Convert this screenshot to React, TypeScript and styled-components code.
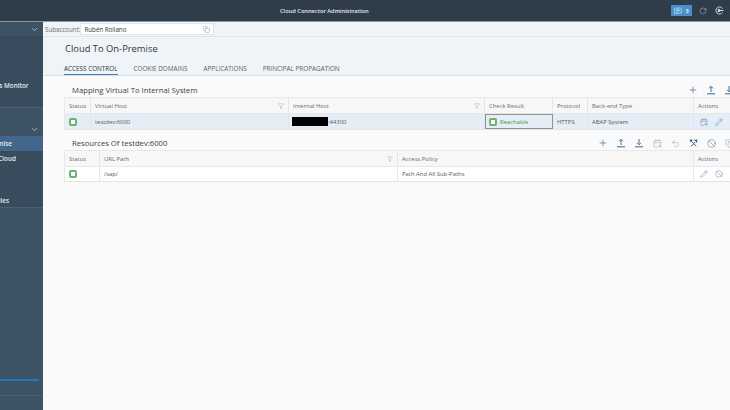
import styled, { createGlobalStyle } from "styled-components";
import {
  Ban,
  CalendarSearch,
  ChevronDown,
  Copy,
  Funnel,
  MessageSquareText,
  Pencil,
  Plus,
  RotateCw,
  Undo2,
} from "lucide-react";

const GlobalStyle = createGlobalStyle`
  html, body {
    margin: 0;
    height: 100%;
    overflow: hidden;
    font-family: "Open Sans", "Liberation Sans", sans-serif;
    background: #fafafa;
  }
  #root {
    height: 100%;
  }
`;

const Page = styled.div`
  display: flex;
  flex-direction: column;
  width: 730px;
  height: 410px;
  overflow: hidden;
`;

const TopBar = styled.header`
  display: flex;
  align-items: center;
  flex: 0 0 22px;
  box-sizing: border-box;
  padding-left: 280px;
  padding-right: 6px;
  background: #2f3d4b;
  border-bottom: 1px solid #8d99a4;
  color: #e3e8ec;
  font-size: 5.7px;
  font-weight: 600;
`;

const TopActions = styled.div`
  display: flex;
  align-items: center;
  gap: 8px;
  margin-left: auto;
  color: #d5dce2;
`;

const NoticeBadge = styled.div`
  display: flex;
  align-items: center;
  justify-content: center;
  gap: 3px;
  width: 21px;
  height: 11px;
  margin-right: -1px;
  background: #4a8fc9;
  color: #fff;
  font-size: 6px;
`;

const Body = styled.div`
  display: flex;
  flex: 1;
  min-height: 0;
`;

const Sidebar = styled.aside`
  flex: 0 0 43px;
  overflow: hidden;
  background: #3e5265;
`;

const SideInner = styled.nav`
  display: flex;
  flex-direction: column;
  width: 103px;
  height: 100%;
  margin-left: -60px;
  color: #e6ebef;
  font-size: 6.3px;
  font-weight: 600;
`;

const SideHead = styled.div`
  display: flex;
  align-items: center;
  justify-content: space-between;
  height: 14px;
  padding: 0 4px 0 8px;
  color: #c9d3db;
`;

const SideItem = styled.div<{ $active?: boolean; $indent?: number }>`
  display: flex;
  align-items: center;
  height: ${(p) => (p.$active ? 15 : 14)}px;
  padding-left: ${(p) => p.$indent ?? 8}px;
  white-space: nowrap;
  background: ${(p) => (p.$active ? "#41688c" : "transparent")};
`;

const SideGroup = styled.div<{ $pad?: number }>`
  display: flex;
  flex-direction: column;
  padding-bottom: ${(p) => p.$pad ?? 0}px;
  background: #394c5e;
  border-bottom: 1px solid #4d6072;
`;

const SideSpacer = styled.div`
  height: 14px;
`;

const SideFoot = styled.div`
  margin-top: auto;
`;

const SideLine = styled.div`
  height: 2px;
  margin-right: 4px;
  margin-bottom: 14px;
  background: #1f7bb3;
`;

const SideBottom = styled(SideItem)`
  height: 14px;
  border-top: 1px solid #4d6072;
`;

const Main = styled.main`
  display: flex;
  flex-direction: column;
  flex: 1;
  min-width: 0;
  background: #fafafa;
`;

const SubBar = styled.div`
  display: flex;
  align-items: center;
  height: 14px;
  padding-left: 2px;
  background: #eff4f9;
  border-bottom: 1px solid #dfe6ec;
  color: #6a6d70;
  font-size: 6.2px;
`;

const SubInput = styled.div`
  display: flex;
  align-items: center;
  justify-content: space-between;
  box-sizing: border-box;
  width: 134px;
  height: 12px;
  padding: 0 3px;
  background: #fff;
  border: 1px solid #e3e7ea;
  color: #33363a;
  svg {
    color: #5b87ad;
  }
`;

const PageHead = styled.div`
  display: flex;
  flex-direction: column;
  height: 39px;
  padding-left: 21px;
  box-sizing: border-box;
  background: #eff4f9;
  border-bottom: 1px solid #d7e2ee;
`;

const PageTitle = styled.h1`
  margin: 4px 0 0 1px;
  color: #32363a;
  font-size: 9.4px;
  font-weight: 400;
  line-height: 16px;
`;

const Tabs = styled.div`
  display: flex;
  gap: 16px;
  margin-top: auto;
`;

const Tab = styled.div<{ $active?: boolean }>`
  height: 14px;
  box-sizing: border-box;
  padding-top: 4px;
  color: ${(p) => (p.$active ? "#32363a" : "#5b5e61")};
  border-bottom: 1px solid ${(p) => (p.$active ? "#4a7ca8" : "transparent")};
  font-size: 6.35px;
  line-height: 8px;
  white-space: nowrap;
`;

const Content = styled.div`
  display: flex;
  flex-direction: column;
  gap: 6px;
  width: 684px;
  padding: 7px 0 0 21px;
`;

const Section = styled.section`
  display: flex;
  flex-direction: column;
`;

const SectionBar = styled.div`
  display: flex;
  align-items: center;
  justify-content: space-between;
  height: 14px;
  padding: 0 10px 0 8px;
`;

const SectionTitle = styled.h2`
  margin: 0;
  color: #3d4145;
  font-size: 7.7px;
  font-weight: 400;
  white-space: nowrap;
`;

const Tools = styled.div`
  display: flex;
  align-items: center;
  color: #2f6496;
`;

const Tool = styled.span<{ $muted?: boolean }>`
  display: flex;
  align-items: center;
  justify-content: center;
  width: 18px;
  color: ${(p) => (p.$muted ? "#7d9cb8" : "inherit")};
`;

const Table = styled.div`
  display: flex;
  flex-direction: column;
  border: 1px solid #e8e8e8;
  border-bottom-color: #e4e4e4;
`;

const Row = styled.div<{ $columns: string; $bg: string; $height: number }>`
  display: grid;
  box-sizing: border-box;
  grid-template-columns: ${(p) => p.$columns};
  height: ${(p) => p.$height}px;
  background: ${(p) => p.$bg};
  border-bottom: 1px solid #e8e8e8;
  &:last-child {
    border-bottom: 0;
  }
`;

const Cell = styled.div<{ $head?: boolean; $focus?: boolean }>`
  display: flex;
  align-items: center;
  justify-content: space-between;
  box-sizing: border-box;
  padding: 0 4px;
  min-width: 0;
  border-right: 1px solid #e6e6e6;
  outline: ${(p) => (p.$focus ? "1px solid #8a9199" : "none")};
  outline-offset: -1px;
  color: ${(p) => (p.$head ? "#666a6e" : "#55595d")};
  font-size: 5.9px;
  white-space: nowrap;
  &:last-child {
    border-right: 0;
  }
`;

const ActionCell = styled(Cell)`
  justify-content: flex-start;
  gap: 7px;
  padding-left: 6px;
  color: #4f7da5;
`;

const StatusBox = styled.span`
  display: inline-block;
  box-sizing: border-box;
  flex: none;
  width: 8px;
  height: 8px;
  background: #fff;
  border: 2px solid #6fb073;
  border-radius: 2px;
`;

const CheckValue = styled.span`
  display: flex;
  align-items: center;
  gap: 3px;
  color: #3f9a47;
`;

const Redacted = styled.span`
  display: inline-block;
  width: 36px;
  height: 9px;
  margin-left: -1px;
  background: #000;
`;

const HostValue = styled.span`
  display: flex;
  align-items: center;
`;

function ArrowBar({ down }: { down?: boolean }) {
  return (
    <svg width="10" height="10" viewBox="0 0 10 10" fill="none" stroke="currentColor" strokeWidth="0.9">
      {down ? <path d="M5 1v5.5M3 4.8l2 2 2-2" /> : <path d="M5 7V1.5M3 3.3l2-2 2 2" />}
      <path d="M1 8.8h8" strokeWidth="1" />
    </svg>
  );
}

function ToolsIcon() {
  return (
    <svg width="9" height="9" viewBox="0 0 10 10" fill="none" stroke="currentColor" strokeWidth="1.1">
      <path d="M2 8.5 7 3.2M2 1.8 8 8.2" />
      <path d="M6 1.6 8.6 1.2 8.4 3.9" strokeWidth="1.3" />
      <path d="M1 1.2 3 1.4 1.4 3" strokeWidth="1.3" />
    </svg>
  );
}

function LogoffIcon() {
  return (
    <svg width="9" height="9" viewBox="0 0 10 10" fill="none" stroke="currentColor" strokeWidth="1">
      <path d="M8.5 3A4 4 0 1 0 8.5 7" />
      <path d="M3.6 3.4 6.6 5 3.6 6.6Z" fill="currentColor" />
      <path d="M6.5 5H9.6" />
    </svg>
  );
}

const firstCols = "26px 198px 196px 68px 35px 106px 1fr";
const secondCols = "35px 298px 296px 1fr";

export default function App() {
  return (
    <Page>
      <GlobalStyle />
      <TopBar>
        Cloud Connector Administration
        <TopActions>
          <NoticeBadge>
            <MessageSquareText size={8} strokeWidth={1.5} />3
          </NoticeBadge>
          <RotateCw size={8} strokeWidth={1.2} />
          <LogoffIcon />
        </TopActions>
      </TopBar>
      <Body>
        <Sidebar>
          <SideInner>
            <SideHead>
              Connector
              <ChevronDown size={9} strokeWidth={2} />
            </SideHead>
            <SideGroup $pad={1}>
              <SideItem>Connector</SideItem>
              <SideItem>Security</SideItem>
              <SideItem>High Availability</SideItem>
              <SideItem>Hardware Metrics Monitor</SideItem>
              <SideItem>Audit</SideItem>
            </SideGroup>
            <SideSpacer />
            <SideHead>
              Subaccount
              <ChevronDown size={9} strokeWidth={2} />
            </SideHead>
            <SideGroup>
              <SideItem $active>Cloud To On-Premise</SideItem>
              <SideItem $indent={12}>On-Premise To Cloud</SideItem>
              <SideItem>Alerting</SideItem>
              <SideItem>Audit</SideItem>
              <SideItem $indent={11}>Log And Trace Files</SideItem>
            </SideGroup>
            <SideFoot>
              <SideLine />
              <SideBottom>Configuration</SideBottom>
            </SideFoot>
          </SideInner>
        </Sidebar>
        <Main>
          <SubBar>
            Subaccount:
            <SubInput>
              Rubén Rollano
              <Copy size={7} strokeWidth={1.4} />
            </SubInput>
          </SubBar>
          <PageHead>
            <PageTitle>Cloud To On-Premise</PageTitle>
            <Tabs>
              <Tab $active>ACCESS CONTROL</Tab>
              <Tab>COOKIE DOMAINS</Tab>
              <Tab>APPLICATIONS</Tab>
              <Tab>PRINCIPAL PROPAGATION</Tab>
            </Tabs>
          </PageHead>
          <Content>
            <Section>
              <SectionBar>
                <SectionTitle>Mapping Virtual To Internal System</SectionTitle>
                <Tools>
                  <Tool><Plus size={10} strokeWidth={1.5} /></Tool>
                  <Tool><ArrowBar /></Tool>
                  <Tool><ArrowBar down /></Tool>
                </Tools>
              </SectionBar>
              <Table>
                <Row $columns={firstCols} $bg="#f7f7f7" $height={16}>
                  <Cell $head>Status</Cell>
                  <Cell $head>Virtual Host<Funnel size={6} strokeWidth={1} /></Cell>
                  <Cell $head>Internal Host<Funnel size={6} strokeWidth={1} /></Cell>
                  <Cell $head>Check Result</Cell>
                  <Cell $head>Protocol</Cell>
                  <Cell $head>Back-end Type</Cell>
                  <Cell $head>Actions</Cell>
                </Row>
                <Row $columns={firstCols} $bg="#e5edf6" $height={15}>
                  <Cell><StatusBox /></Cell>
                  <Cell>testdev:6000</Cell>
                  <Cell><HostValue><Redacted />:44300</HostValue></Cell>
                  <Cell $focus>
                    <CheckValue><StatusBox />Reachable</CheckValue>
                  </Cell>
                  <Cell>HTTPS</Cell>
                  <Cell>ABAP System</Cell>
                  <ActionCell>
                    <CalendarSearch size={8} strokeWidth={1.3} />
                    <Pencil size={8} strokeWidth={1.3} />
                  </ActionCell>
                </Row>
              </Table>
            </Section>
            <Section>
              <SectionBar>
                <SectionTitle>Resources Of testdev:6000</SectionTitle>
                <Tools>
                  <Tool><Plus size={10} strokeWidth={1.5} /></Tool>
                  <Tool><ArrowBar /></Tool>
                  <Tool><ArrowBar down /></Tool>
                  <Tool $muted><CalendarSearch size={9} strokeWidth={1.2} /></Tool>
                  <Tool $muted><Undo2 size={9} strokeWidth={1.2} /></Tool>
                  <Tool><ToolsIcon /></Tool>
                  <Tool><Ban size={9} strokeWidth={1.2} /></Tool>
                  <Tool $muted><Copy size={9} strokeWidth={1.2} /></Tool>
                </Tools>
              </SectionBar>
              <Table>
                <Row $columns={secondCols} $bg="#f7f7f7" $height={16}>
                  <Cell $head>Status</Cell>
                  <Cell $head>URL Path<Funnel size={6} strokeWidth={1} /></Cell>
                  <Cell $head>Access Policy</Cell>
                  <Cell $head>Actions</Cell>
                </Row>
                <Row $columns={secondCols} $bg="#fff" $height={14}>
                  <Cell><StatusBox /></Cell>
                  <Cell>/sap/</Cell>
                  <Cell>Path And All Sub-Paths</Cell>
                  <ActionCell>
                    <Pencil size={8} strokeWidth={1.3} />
                    <Ban size={8} strokeWidth={1.3} />
                  </ActionCell>
                </Row>
              </Table>
            </Section>
          </Content>
        </Main>
      </Body>
    </Page>
  );
}
